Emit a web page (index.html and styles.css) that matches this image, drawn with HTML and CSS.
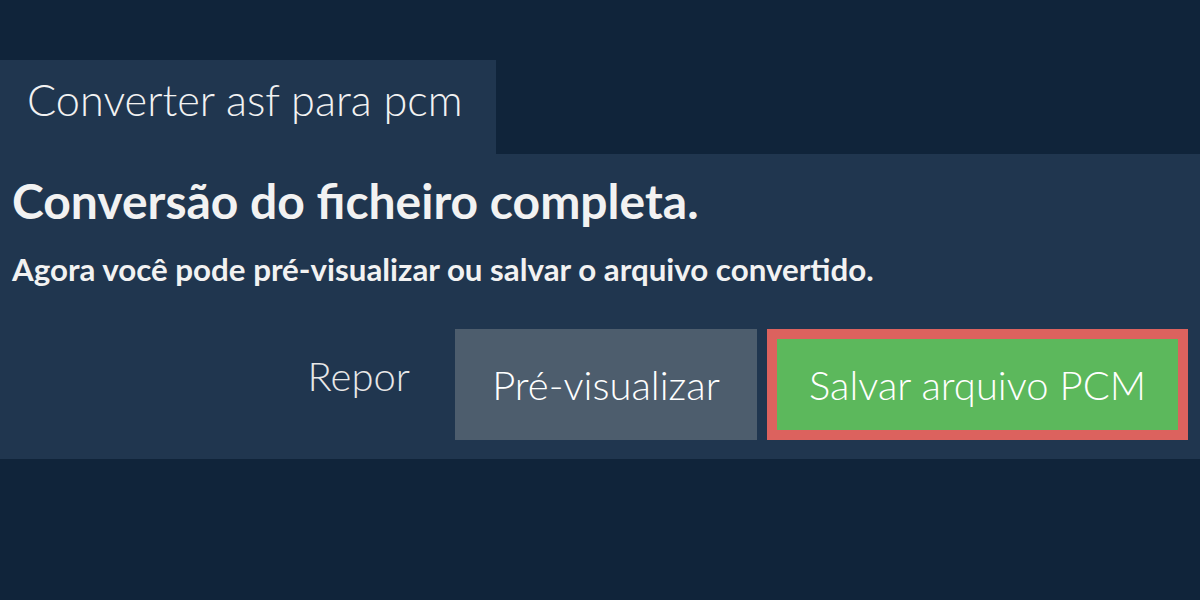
FILE: index.html
```html
<!DOCTYPE html>
<html lang="pt">
<head>
    <meta charset="UTF-8">
    <meta name="viewport" content="width=device-width, initial-scale=1.0">
    <title>Converter asf para pcm</title>
    <link rel="stylesheet" href="styles.css">
</head>
<body>
    <div class="tab">Converter asf para pcm</div>
    <div class="panel">
        <h1>Conversão do ficheiro completa.</h1>
        <p class="sub">Agora você pode pré-visualizar ou salvar o arquivo convertido.</p>
        <div class="actions">
            <button class="reset">Repor</button>
            <button class="preview">Pré-visualizar</button>
            <button class="save">Salvar arquivo PCM</button>
        </div>
    </div>
</body>
</html>
```

FILE: styles.css
```css
body {
    font-family: 'Lato', sans-serif;
    margin: 0;
    padding-top: 60px;
    background: #10243a;
    color: #f2f2f2;
}
.tab {
    width: 496px;
    height: 94px;
    box-sizing: border-box;
    padding: 13px 0 0 27px;
    background: #20364f;
    font-size: 43.3px;
    font-weight: 300;
    line-height: 52px;
}
.panel {
    background: #20364f;
    height: 305px;
    box-sizing: border-box;
    padding: 17px 12px 19px 12px;
    display: flex;
    flex-direction: column;
}
h1 {
    margin: 0;
    font-size: 48px;
    font-weight: 700;
    line-height: 60px;
}
.sub {
    margin: 18px 0 0 0;
    font-size: 31.3px;
    font-weight: 700;
    line-height: 40px;
}
.actions {
    margin-top: auto;
    display: flex;
    justify-content: flex-end;
    align-items: stretch;
    gap: 10px;
    height: 111px;
}
button {
    font-family: 'Lato', sans-serif;
    font-size: 40px;
    font-weight: 300;
    color: #fff;
    border: none;
    cursor: pointer;
    padding: 0;
}
.reset {
    background: none;
    color: #e8e8e8;
    padding: 0 35px 18px 0;
}
.preview {
    background: #4d5d6d;
    width: 302px;
}
.save {
    background: #5cb85c;
    border: 10px solid #dc625e;
    width: 421px;
}
```
